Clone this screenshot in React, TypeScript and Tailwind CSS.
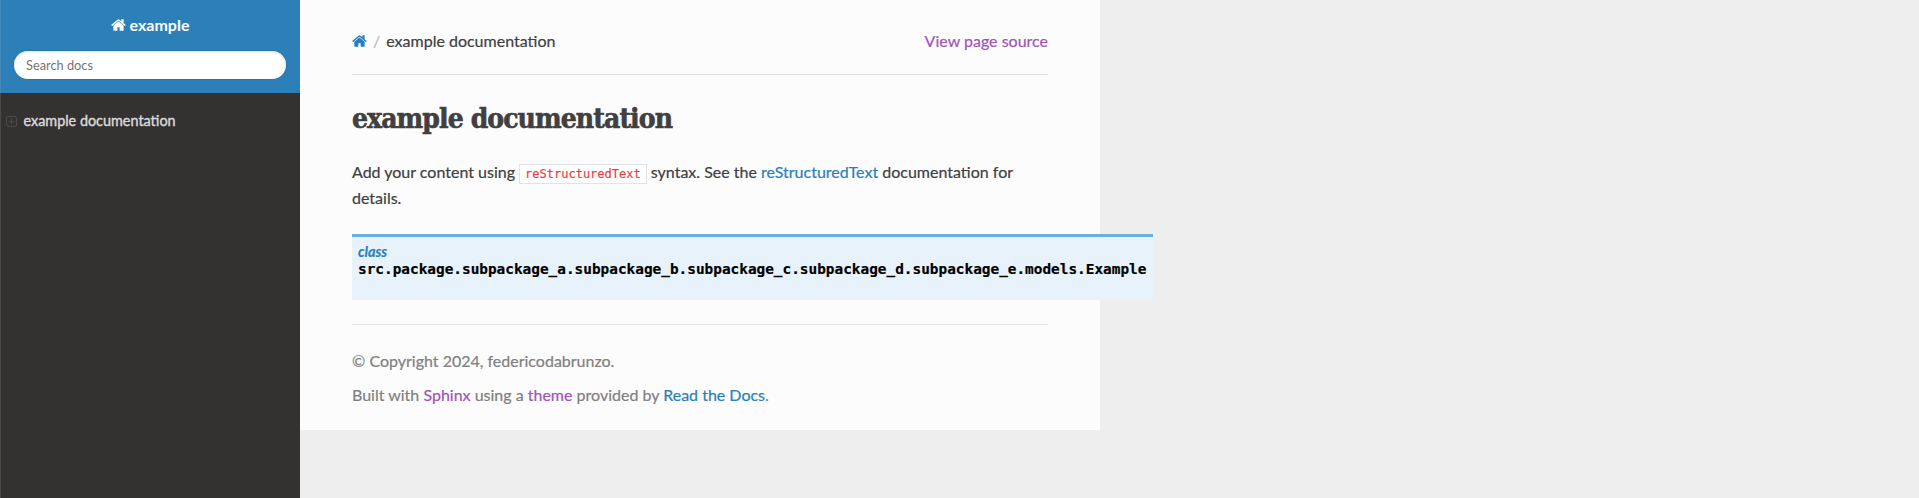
function HomeIcon({ className }: { className: string }) {
  return (
    <svg viewBox="0 0 1664 1792" fill="currentColor" className={className} aria-hidden="true">
      <path d="M1408 992v480q0 26-19 45t-45 19h-384v-384h-256v384h-384q-26 0-45-19t-19-45v-480q0-1 .5-3t.5-3l575-474 575 474q1 2 1 6zm223-69l-62 74q-8 9-21 11h-3q-13 0-21-7l-692-577-692 577q-12 8-24 7-13-2-21-11l-62-74q-8-10-7-23.5t11-21.5l719-599q32-26 76-26t76 26l244 204v-195q0-14 9-23t23-9h192q14 0 23 9t9 23v408l219 182q10 8 11 21.5t-7 23.5z" />
    </svg>
  );
}

function Sidebar() {
  return (
    <nav className="w-[300px] shrink-0 bg-[#343131] shadow-[inset_1px_0_#4a4947]">
      <div className="flex h-[93px] flex-col items-center bg-[#2c80b7] px-[14px] pt-[13px] shadow-[inset_1px_0_#4289b8]">
        <a href="#" className="flex h-6 items-center text-[16px] font-bold text-[#fcfcfc]">
          <HomeIcon className="mr-1 h-4 w-[15px]" />
          example
        </a>
        <input
          type="text"
          placeholder="Search docs"
          className="mt-[14px] h-[28px] w-full rounded-full bg-white px-3 text-[12.8px] shadow-[inset_0_1px_3px_#ddd,0_0_0_1px_#2878ab] placeholder:text-[#757575]"
        />
      </div>
      <div className="flex h-[56px] items-center pl-[6px] text-[14.4px] text-[#d9d9d9] [-webkit-text-stroke:0.4px]">
        <svg viewBox="0 0 11 11" fill="none" stroke="#4d4a4a" className="mr-[6.5px] h-[11px] w-[11px]">
          <rect x=".5" y=".5" width="10" height="10" rx="1.5" />
          <path d="M2.5 5.5h6M5.5 2.5v6" />
        </svg>
        <a href="#">example documentation</a>
      </div>
    </nav>
  );
}

export default function App() {
  return (
    <div className="flex h-[498px] items-start bg-[#eeeeee] font-['Lato',sans-serif] text-[16px] text-[#404040]">
      <div className="flex self-stretch">
        <Sidebar />
      </div>
      <main className="h-[430px] w-[800px] bg-[#fcfcfc] px-[52px] pt-[29px] [-webkit-text-stroke:0.2px]">
        <div className="flex h-[46px] items-start border-b border-[#e1e4e5] leading-6">
          <a href="#" className="flex h-6 items-center text-[#2980b9]">
            <HomeIcon className="h-4 w-[15px]" />
          </a>
          <span className="pr-[6px] pl-[6px] text-[#bbbbbb]">/</span>
          <span>example documentation</span>
          <a href="#" className="ml-auto text-[#9f55b7]">
            View page source
          </a>
        </div>
        <h1 className="mt-6 h-[38px] text-[28px] leading-[39px] font-bold tracking-[-0.92px] whitespace-nowrap font-['Roboto_Slab','DejaVu_Serif_Condensed','DejaVu_Serif',serif] [-webkit-text-stroke:0.6px]">
          example documentation
        </h1>
        <p className="mt-[22px] leading-[26px]">
          Add your content using{" "}
          <code className="border border-[#e1e4e5] bg-white px-[5px] py-[2px] font-['DejaVu_Sans_Mono',monospace] text-[12px] leading-none text-[#e83f42]">
            reStructuredText
          </code>{" "}
          syntax. See the{" "}
          <a href="#" className="text-[#2980b9]">
            reStructuredText
          </a>{" "}
          documentation for details.
        </p>
        <div className="mt-[23px] h-[66px] w-[801px] border-t-[3px] border-[#6ab0de] bg-[#e7f2fa] px-[6px] pt-[6px] text-[14.4px] leading-[17px] font-bold">
          <em className="block text-[#2980b9]">class</em>
          <span className="block pt-px font-['DejaVu_Sans_Mono',monospace] whitespace-nowrap text-black">
            src.package.subpackage_a.subpackage_b.subpackage_c.subpackage_d.subpackage_e.models.Example
          </span>
        </div>
        <footer className="mt-6 border-t border-[#e1e4e5] pt-6 leading-6 text-[#808080]">
          <p>© Copyright 2024, federicodabrunzo.</p>
          <p className="mt-[10px]">
            Built with{" "}
            <a href="#" className="text-[#9f55b7]">
              Sphinx
            </a>{" "}
            using a{" "}
            <a href="#" className="text-[#9f55b7]">
              theme
            </a>{" "}
            provided by{" "}
            <a href="#" className="text-[#2980b9]">
              Read the Docs
            </a>
            .
          </p>
        </footer>
      </main>
    </div>
  );
}
